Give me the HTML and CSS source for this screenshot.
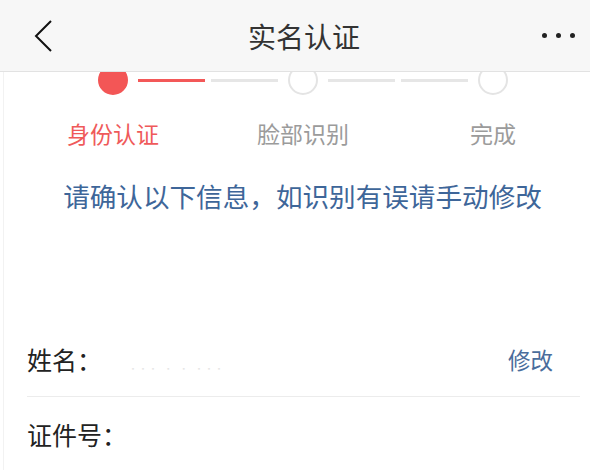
FILE: index.html
```html
<!DOCTYPE html>
<html lang="zh-CN">
<head>
<meta charset="utf-8">
<title>实名认证</title>
<link rel="stylesheet" href="styles.css">
</head>
<body>
<header class="header">
  <div class="hd-left">
    <svg class="back" width="20" height="34" viewBox="0 0 20 34"><path d="M17 2 L2 17 L17 32" fill="none" stroke="#111" stroke-width="2"/></svg>
  </div>
  <div class="title">实名认证</div>
  <div class="hd-right">
    <span class="dot"></span><span class="dot"></span><span class="dot"></span>
  </div>
</header>
<main class="main">
  <div class="steps">
    <div class="step">
      <span class="line hidden"></span>
      <span class="circle active"></span>
      <span class="line red"></span>
    </div>
    <div class="step">
      <span class="line"></span>
      <span class="circle"></span>
      <span class="line"></span>
    </div>
    <div class="step">
      <span class="line"></span>
      <span class="circle"></span>
      <span class="line hidden"></span>
    </div>
  </div>
  <div class="labels">
    <div class="label current">身份认证</div>
    <div class="label">脸部识别</div>
    <div class="label">完成</div>
  </div>
  <p class="notice">请确认以下信息，如识别有误请手动修改</p>
  <div class="form">
    <div class="row">
      <span class="key">姓名：</span>
      <span class="masked">▪▪▪ ▪ ▪ ▪▪▪</span>
      <span class="edit">修改</span>
    </div>
    <div class="row last">
      <span class="key">证件号：</span>
    </div>
  </div>
</main>
</body>
</html>
```

FILE: styles.css
```css
* { box-sizing: border-box; }
html, body {
  margin: 0;
  padding: 0;
  background: #fff;
  font-family: "Noto Sans CJK SC", "Noto Sans", sans-serif;
}
.header {
  position: relative;
  z-index: 2;
  height: 72px;
  background: #f7f7f7;
  border-bottom: 1px solid #e2e2e2;
  display: grid;
  grid-template-columns: 1fr auto 1fr;
  align-items: center;
}
.hd-left {
  padding-left: 34px;
  display: flex;
  align-items: center;
}
.back { display: block; }
.title {
  font-size: 28px;
  line-height: 30px;
  color: #333;
  font-weight: 400;
  padding-left: 18px;
}
.hd-right {
  display: flex;
  justify-content: flex-end;
  gap: 9px;
  padding-right: 15px;
}
.dot {
  width: 5px;
  height: 5px;
  border-radius: 50%;
  background: #222;
}
.main {
  min-height: 398px;
  background: linear-gradient(to right, transparent 3px, #f2f2f2 3px, #f2f2f2 4px, transparent 4px);
}
.steps {
  position: relative;
  z-index: 1;
  margin-top: -7px;
  padding-left: 18px;
  display: flex;
}
.step {
  width: 190px;
  display: flex;
  align-items: center;
}
.line {
  flex: 1;
  height: 3px;
  background: #e6e6e6;
  margin: 0 3px;
}
.line.red { background: #f35858; }
.line.hidden { visibility: hidden; }
.circle {
  width: 30px;
  height: 30px;
  border-radius: 50%;
  border: 2px solid #e4e4e4;
  background: #fff;
  margin: 0 7px;
  flex: none;
}
.circle.active {
  background: #f35656;
  border-color: #f35656;
}
.labels {
  position: relative;
  z-index: 1;
  padding-left: 18px;
  margin-top: 27px;
  display: flex;
}
.label {
  width: 190px;
  text-align: center;
  font-size: 23px;
  line-height: 23px;
  color: #9b9b9b;
}
.label.current { color: #ef5a5a; }
.notice {
  margin: 37px 0 0;
  padding-left: 15px;
  text-align: center;
  font-size: 26.6px;
  line-height: 27px;
  color: #3e6699;
  white-space: nowrap;
}
.form {
  margin: 114px 10px 0 27px;
}
.row {
  display: flex;
  align-items: center;
  padding: 24px 27px 24px 0;
  border-bottom: 1px solid #ececec;
}
.row.last {
  border-bottom: none;
  padding-top: 25px;
}
.key {
  font-size: 25px;
  line-height: 25px;
  color: #222;
}
.masked {
  align-self: flex-end;
  margin-left: 28px;
  font-size: 6px;
  line-height: 6px;
  color: #e6e6e6;
  letter-spacing: 4px;
}
.edit {
  margin-left: auto;
  font-size: 22.5px;
  line-height: 25px;
  color: #4a6d9c;
}
```
